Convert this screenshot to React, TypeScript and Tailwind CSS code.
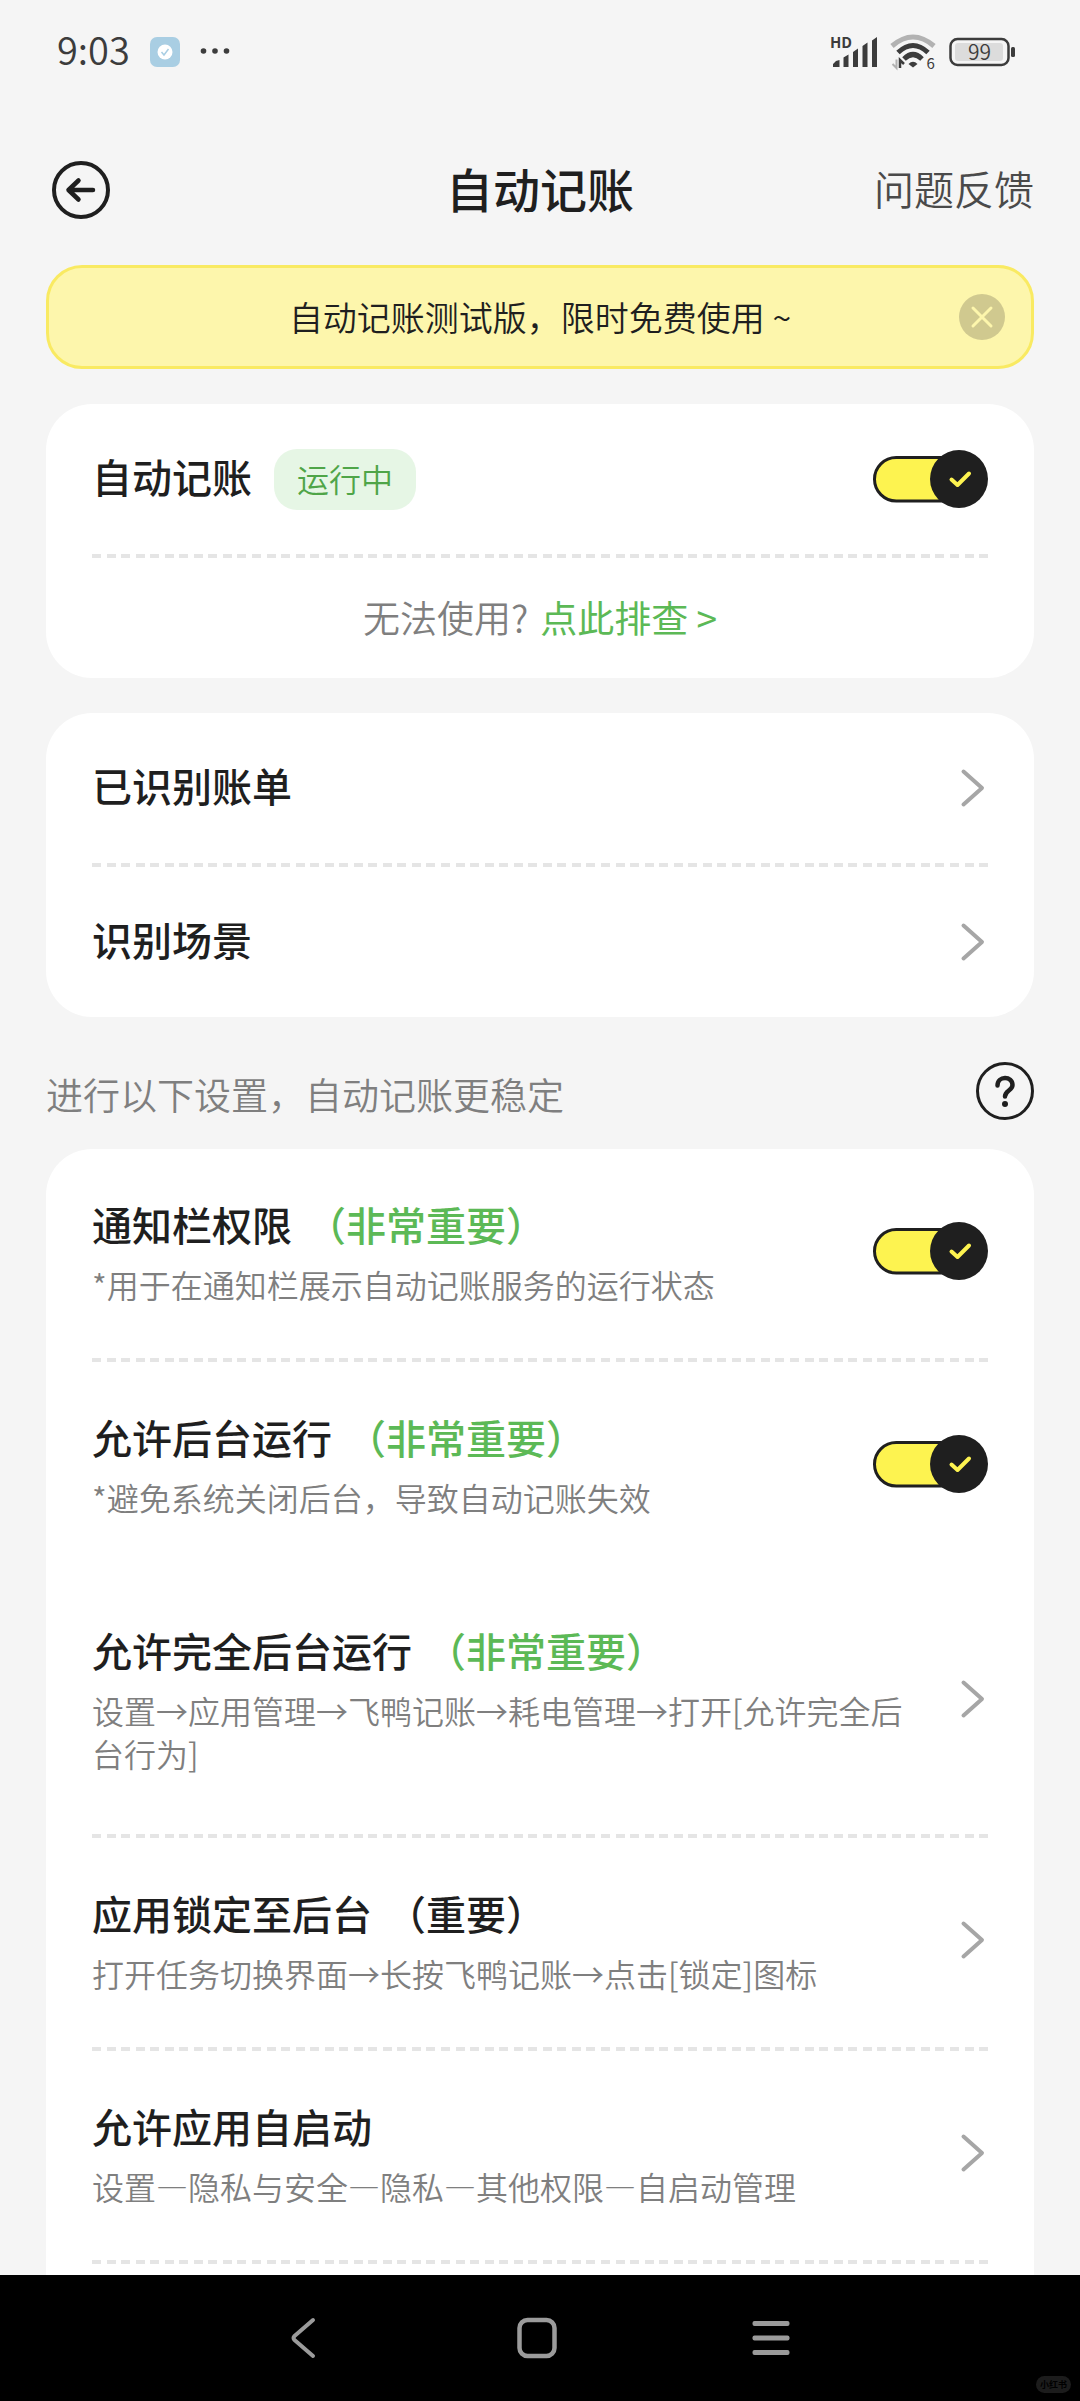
import { useState } from "react";
import type { ReactNode } from "react";

function Divider() {
  return (
    <div className="h-1 w-full bg-[repeating-linear-gradient(90deg,#e5e5e5_0_9px,transparent_9px_1.623%)]" />
  );
}

function Toggle({ label }: { label: string }) {
  const [on, setOn] = useState(true);
  return (
    <label className="relative block shrink-0 cursor-pointer">
      <input
        type="checkbox"
        role="switch"
        className="sr-only"
        aria-label={label}
        checked={on}
        onChange={(e) => setOn(e.target.checked)}
      />
      <svg width="115" height="58" viewBox="0 0 115 58" aria-hidden="true">
        <rect x="1.5" y="7.5" width="96" height="43.5" rx="21.75" fill={on ? "#fdf350" : "#e5e5e5"} stroke="#1f1f1f" strokeWidth="3" />
        <circle cx={on ? 86 : 29} cy="29" r="29" fill="#1f1f1f" />
        {on && (
          <path d="M78.5 29.5 L84.5 35 L96 23.5" fill="none" stroke="#fdf350" strokeWidth="4" strokeLinecap="round" strokeLinejoin="round" />
        )}
      </svg>
    </label>
  );
}

function Chevron() {
  return (
    <svg className="mr-[2px] shrink-0" width="26" height="40" viewBox="0 0 26 40" fill="none" aria-hidden="true">
      <path d="M3.5 3.5 L22 20 L3.5 36.5" stroke="#a6a6a6" strokeWidth="4" strokeLinecap="round" strokeLinejoin="round" />
    </svg>
  );
}

function LinkRow({ title }: { title: string }) {
  return (
    <a href="#" className="flex h-[150px] items-center justify-between">
      <span className="pb-1.5 text-[40px] font-medium leading-[56px]">{title}</span>
      <Chevron />
    </a>
  );
}

type SettingProps = {
  title: string;
  note?: string;
  strong?: boolean;
  desc: string;
  tall?: boolean;
  control: ReactNode;
};

function Setting({ title, note, strong, desc, tall, control }: SettingProps) {
  return (
    <div className={tall ? "flex items-center gap-9 pt-[47px] pb-[59px]" : "flex items-center gap-9 pt-[47px] pb-[52px]"}>
      <div className="flex-1">
        <h2 className="flex gap-3.5 text-[40px] font-medium leading-[56px]">
          <span>{title}</span>
          {note && <span className={strong ? "text-[#5cb956]" : ""}>{note}</span>}
        </h2>
        <p className="mt-[11px] text-[32px] font-[350] leading-[43px] text-[#7f7f7f]">{desc}</p>
      </div>
      {control}
    </div>
  );
}

function StatusBar() {
  return (
    <div className="flex h-[104px] items-center justify-between pr-16 pl-[57px] text-[#3c3c3c]">
      <div className="flex items-center">
        <span className="pb-1.5 text-[38px] font-[350] leading-[52px]">9:03</span>
        <svg className="ml-5" width="30" height="30" viewBox="0 0 30 30" aria-hidden="true">
          <rect width="30" height="30" rx="7" fill="#a9cee3" />
          <circle cx="15" cy="15" r="7.5" fill="#fff" />
          <path d="M11.5 15 L14 18 L18.5 12" fill="none" stroke="#a9cee3" strokeWidth="1.5" />
        </svg>
        <svg className="ml-5" width="30" height="8" viewBox="0 0 30 8" fill="#3c3c3c" aria-hidden="true">
          <circle cx="3.5" cy="3" r="2.8" />
          <circle cx="15" cy="3" r="2.8" />
          <circle cx="26.5" cy="3" r="2.8" />
        </svg>
      </div>
      <div className="flex items-center">
        <svg width="48" height="46" viewBox="0 -6 48 46" fill="#3c3c3c" aria-hidden="true">
          <text x="0" y="13" fontSize="15" fontWeight="700">HD</text>
          <path d="M3 29 L6 26 L9.500 25 V32 H3 Z M13.500 22.500 L18.500 19.500 V32 H13.500 Z M23 17 L28 13.500 V32 H23 Z M32.500 11 L37.500 7.500 V32 H32.500 Z M42 5.500 L47 2 V32 H42 Z" />
        </svg>
        <svg className="ml-3" width="46" height="46" viewBox="0 -4 46 46" fill="none" aria-hidden="true">
          <path d="M2 13 Q23 -5 44 13" stroke="#b2b2b2" strokeWidth="5" />
          <path d="M8 19.500 Q23 5.500 38 19.500" stroke="#3c3c3c" strokeWidth="5" />
          <path d="M14 26 Q23 17 32 26" stroke="#3c3c3c" strokeWidth="5" />
          <path d="M18.500 31 Q23 26.500 27.500 31 L23 34.500 Z" fill="#3c3c3c" />
          <path d="M6.500 26.500 V35 L2.500 31" stroke="#b2b2b2" strokeWidth="2" />
          <path d="M10 35 V27 L14 31" stroke="#3c3c3c" strokeWidth="2.500" />
          <text x="36.500" y="36" fontSize="15" fill="#3c3c3c">6</text>
        </svg>
        <svg className="ml-3" width="68" height="30" viewBox="0 0 68 30" aria-hidden="true">
          <rect x="2.500" y="2" width="58" height="26" rx="7" fill="none" stroke="#3c3c3c" strokeWidth="2.500" />
          <rect x="7" y="6" width="48" height="18" rx="3" fill="#dcdcdc" />
          <rect x="63" y="10" width="4" height="10" rx="1.500" fill="#3c3c3c" />
          <text x="31.500" y="23" fontSize="21" textAnchor="middle" fontWeight="350" fill="#3c3c3c">99</text>
        </svg>
      </div>
    </div>
  );
}

export default function App() {
  const [banner, setBanner] = useState(true);
  return (
    <div
      lang="zh-CN"
      className="relative flex min-h-screen flex-col bg-[#f5f5f5] font-['Noto_Sans_CJK_SC',sans-serif] text-[#1f1f1f]"
    >
      <StatusBar />
      <header className="grid grid-cols-[1fr_auto_1fr] items-center px-[46px] pt-[57px] pb-[46px]">
        <button type="button" aria-label="返回" className="ml-1.5 justify-self-start">
          <svg width="58" height="58" viewBox="0 0 58 58" fill="none" stroke="#1f1f1f" strokeLinecap="round" strokeLinejoin="round">
            <circle cx="29" cy="29" r="27" strokeWidth="4" />
            <path d="M41 29 H16.500 M26.500 19.500 L16.500 29 L26.500 38.500" strokeWidth="4.500" />
          </svg>
        </button>
        <h1 className="pb-1 text-[47px] font-medium leading-[54px]">自动记账</h1>
        <a href="#" className="justify-self-end pb-1 text-[40px] font-[350] leading-[54px] text-[#4a4a4a]">
          问题反馈
        </a>
      </header>

      <main className="flex grow flex-col px-[46px]">
        {banner && (
          <div className="grid h-[104px] grid-cols-[46px_1fr_46px] items-center rounded-[36px] border-3 border-[#f9ea62] bg-[#fdf6ac] px-[26px]">
            <p className="col-start-2 text-center text-[34px] font-[350] leading-[50px]">自动记账测试版，限时免费使用 ~</p>
            <button type="button" aria-label="关闭" onClick={() => setBanner(false)}>
              <svg width="46" height="46" viewBox="0 0 46 46">
                <circle cx="23" cy="23" r="23" fill="#d0c98f" />
                <path d="M14 14 L32 32 M32 14 L14 32" stroke="#fdf6ac" strokeWidth="3" strokeLinecap="round" />
              </svg>
            </button>
          </div>
        )}

        <section className="mt-[35px] rounded-[46px] bg-white px-[46px]">
          <div className="flex h-[150px] items-center justify-between">
            <div className="flex items-center gap-[22px]">
              <h2 className="pb-1.5 text-[40px] font-medium leading-[56px]">自动记账</h2>
              <span className="rounded-[23px] bg-[#e6f6e5] px-[23px] pt-[6px] pb-[8px] text-[32px] font-[350] leading-[47px] text-[#4fa548]">
                运行中
              </span>
            </div>
            <Toggle label="自动记账" />
          </div>
          <Divider />
          <p className="flex h-[120px] items-center justify-center gap-3 text-[37px] font-[350] text-[#7f7f7f]">
            <span>无法使用?</span>
            <a href="#" className="font-normal text-[#5cb956]">
              点此排查 &gt;
            </a>
          </p>
        </section>

        <section className="mt-[35px] rounded-[46px] bg-white px-[46px]">
          <LinkRow title="已识别账单" />
          <Divider />
          <LinkRow title="识别场景" />
        </section>

        <div className="mt-[45px] flex items-start justify-between">
          <p className="mt-1.5 text-[37px] font-[350] leading-[52px] text-[#7f7f7f]">进行以下设置，自动记账更稳定</p>
          <button type="button" aria-label="帮助">
            <svg width="58" height="58" viewBox="0 0 58 58" fill="none" stroke="#1f1f1f" strokeLinecap="round">
              <circle cx="29" cy="29" r="27.500" strokeWidth="3" />
              <path d="M21.500 23.500 C21.500 13.500 36.500 13.500 36.500 23 C36.500 28.500 29 28.500 29 34.500" strokeWidth="4.500" />
              <circle cx="29" cy="42" r="3" fill="#1f1f1f" stroke="none" />
            </svg>
          </button>
        </div>

        <section className="mt-[29px] grow rounded-t-[46px] bg-white px-[46px]">
          <Setting
            title="通知栏权限"
            note="（非常重要）"
            strong
            desc="*用于在通知栏展示自动记账服务的运行状态"
            control={<Toggle label="通知栏权限" />}
          />
          <Divider />
          <Setting
            title="允许后台运行"
            note="（非常重要）"
            strong
            desc="*避免系统关闭后台，导致自动记账失效"
            control={<Toggle label="允许后台运行" />}
          />
          <div className="h-1" />
          <Setting
            title="允许完全后台运行"
            note="（非常重要）"
            strong
            tall
            desc="设置→应用管理→飞鸭记账→耗电管理→打开[允许完全后台行为]"
            control={<Chevron />}
          />
          <Divider />
          <Setting
            title="应用锁定至后台"
            note="（重要）"
            desc="打开任务切换界面→长按飞鸭记账→点击[锁定]图标"
            control={<Chevron />}
          />
          <Divider />
          <Setting
            title="允许应用自启动"
            desc="设置—隐私与安全—隐私—其他权限—自启动管理"
            control={<Chevron />}
          />
          <Divider />
        </section>
      </main>

      <nav className="flex h-[126px] shrink-0 items-center justify-center bg-black pr-[7px]" aria-label="系统导航">
        <button type="button" aria-label="返回" className="flex w-[234px] justify-center">
          <svg width="26" height="42" viewBox="0 0 26 42" fill="none" stroke="#9b9b9b" strokeWidth="4" strokeLinecap="round" strokeLinejoin="round">
            <path d="M23 3 L4.500 19 Q2.500 21 4.500 23 L23 39" />
          </svg>
        </button>
        <button type="button" aria-label="主页" className="flex w-[234px] justify-center">
          <svg width="40" height="42" viewBox="0 0 40 42" fill="none" stroke="#9b9b9b" strokeWidth="4.500">
            <rect x="2.500" y="3" width="35" height="36" rx="8" />
          </svg>
        </button>
        <button type="button" aria-label="最近任务" className="flex w-[234px] justify-center">
          <svg width="38" height="42" viewBox="0 0 38 42" fill="#9b9b9b">
            <rect x="0.500" y="4" width="37" height="5" rx="2" />
            <rect x="0.500" y="18.500" width="37" height="5" rx="2" />
            <rect x="0.500" y="33" width="37" height="5" rx="2" />
          </svg>
        </button>
      </nav>
      <span className="absolute right-[9px] bottom-2 rounded-full bg-[#1c1c1c] px-[4px] text-[9px] font-bold leading-[17px] text-black">
        小红书
      </span>
    </div>
  );
}
